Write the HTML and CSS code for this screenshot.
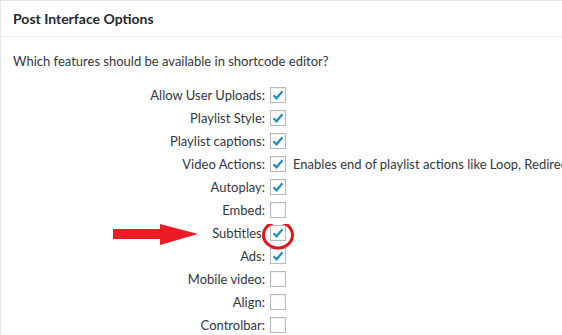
FILE: index.html
```html
<!DOCTYPE html>
<html lang="en">
<head>
    <meta charset="UTF-8">
    <title>Post Interface Options</title>
    <link rel="stylesheet" href="styles.css">
</head>
<body>
    <div class="postbox">
        <h2 class="hndle">Post Interface Options</h2>
        <div class="inside">
            <p class="intro">Which features should be available in shortcode editor?</p>

            <div class="options">
                <label class="opt"><span class="name">Allow User Uploads:</span><span class="box on"></span></label>
                <label class="opt"><span class="name">Playlist Style:</span><span class="box on"></span></label>
                <label class="opt"><span class="name">Playlist captions:</span><span class="box on"></span></label>
                <label class="opt"><span class="name">Video Actions:</span><span class="box on"></span><span class="note">Enables end of playlist actions like Loop, Redirect to URL or Next Post.</span></label>
                <label class="opt"><span class="name">Autoplay:</span><span class="box on"></span></label>
                <label class="opt"><span class="name">Embed:</span><span class="box"></span></label>
                <label class="opt"><span class="name">Subtitles:</span><span class="box on"></span></label>
                <label class="opt"><span class="name">Ads:</span><span class="box on"></span></label>
                <label class="opt"><span class="name">Mobile video:</span><span class="box"></span></label>
                <label class="opt"><span class="name">Align:</span><span class="box"></span></label>
                <label class="opt"><span class="name">Controlbar:</span><span class="box"></span></label>
            </div>
        </div>

        <!-- annotation drawn over the screenshot -->
        <svg class="callout" width="200" height="40" viewBox="0 0 200 40">
            <polygon points="0,5 47,5 47,0 85,10 47,21 47,15 0,15" fill="#ed1c24"/>
            <ellipse cx="165" cy="11" rx="14.5" ry="13" fill="none" stroke="#e2151d" stroke-width="3"/>
        </svg>
    </div>
</body>
</html>
```

FILE: styles.css
```css
body {
    margin: 0;
    font-family: Lato, "Open Sans", sans-serif;
    color: #32373c;
    background: #fff;
    overflow: hidden;
}
.postbox {
    position: relative;
    width: 760px;
    height: 400px;
    border: 1px solid #e5e5e5;
    box-sizing: border-box;
}
.hndle {
    margin: 0;
    padding: 8px 12px;
    font-size: 14px;
    font-weight: 700;
    line-height: 19px;
    color: #23282d;
    border-bottom: 1px solid #eee;
}
.inside {
    padding: 0 12px;
}
.intro {
    margin: 15px 0 13px;
    font-size: 13px;
    line-height: 18px;
}
.options {
    display: flex;
    flex-direction: column;
}
.opt {
    display: flex;
    align-items: center;
    height: 23px;
    font-size: 13px;
    white-space: nowrap;
}
.name {
    width: 257px;
    padding-right: 5px;
    box-sizing: border-box;
    text-align: right;
}
.box {
    width: 16px;
    height: 16px;
    border: 1px solid #b4b9be;
    box-sizing: border-box;
    background: #fff center / 12px 12px no-repeat;
    box-shadow: inset 0 1px 2px rgba(0,0,0,0.07);
}
.box.on {
    background-image: url("data:image/svg+xml,%3Csvg xmlns='http://www.w3.org/2000/svg' viewBox='0 0 12 12'%3E%3Cpath d='M1.5 6.3l3 3 6-7' fill='none' stroke='%231e8cbe' stroke-width='2.2'/%3E%3C/svg%3E");
}
.note {
    margin-left: 7px;
}
.callout {
    position: absolute;
    left: 112px;
    top: 223px;
}
```
